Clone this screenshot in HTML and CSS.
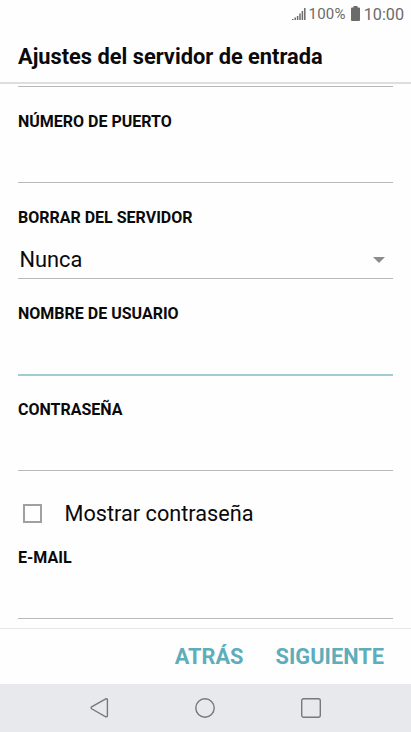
FILE: index.html
```html
<!DOCTYPE html>
<html lang="es">
<head>
    <meta charset="UTF-8">
    <meta name="viewport" content="width=device-width, initial-scale=1.0">
    <title>Ajustes del servidor de entrada</title>
    <link rel="stylesheet" href="styles.css">
</head>
<body>
    <div class="status-bar">
        <svg class="signal" width="14" height="14" viewBox="0 0 14 14">
            <path d="M.8 13v-1M3.200 13v-2.500M5.600 13V9M8 13V6.500M10.400 13V4M12.800 13V1" />
        </svg>
        <span class="battery-level">100%</span>
        <svg class="battery" width="9" height="15" viewBox="0 0 9 15">
            <path d="M2.500 0h4v1.500H8q1 0 1 1V14q0 1-1 1H1q-1 0-1-1V2.500q0-1 1-1h1.500z" />
        </svg>
        <span class="clock">10:00</span>
    </div>

    <header class="header">
        <h1>Ajustes del servidor de entrada</h1>
    </header>

    <form class="settings">
        <div class="field">
            <label class="field-label" for="port">NÚMERO DE PUERTO</label>
            <input type="text" class="field-input" id="port">
        </div>
        <div class="field">
            <span class="field-label">BORRAR DEL SERVIDOR</span>
            <div class="select">
                <span>Nunca</span>
                <svg class="arrow" width="12" height="6" viewBox="0 0 12 6">
                    <path d="M0 0h12L6 6z" />
                </svg>
            </div>
        </div>
        <div class="field active">
            <label class="field-label" for="user">NOMBRE DE USUARIO</label>
            <input type="text" class="field-input" id="user">
        </div>
        <div class="field">
            <label class="field-label" for="password">CONTRASEÑA</label>
            <input type="password" class="field-input" id="password">
        </div>
        <label class="show-password">
            <input type="checkbox" class="checkbox">
            <span>Mostrar contraseña</span>
        </label>
        <div class="field">
            <label class="field-label" for="email">E-MAIL</label>
            <input type="email" class="field-input" id="email">
        </div>
    </form>

    <footer class="actions">
        <button class="action-button">ATRÁS</button>
        <button class="action-button">SIGUIENTE</button>
    </footer>

    <nav class="nav-bar">
        <svg class="nav-icon" width="22" height="22" viewBox="0 0 22 22">
            <path d="M16.800 1.800 3 9.600q-1.800 1.200 0 2.400l13.800 7.800q1.600.5 1.600-1.300V3.100q0-1.800-1.600-1.300z" />
        </svg>
        <svg class="nav-icon" width="22" height="22" viewBox="0 0 22 22">
            <circle cx="11" cy="11" r="9.200" />
        </svg>
        <svg class="nav-icon" width="22" height="22" viewBox="0 0 22 22">
            <rect x="1.700" y="1.700" width="18.600" height="18.600" rx="2" />
        </svg>
    </nav>
</body>
</html>
```

FILE: styles.css
```css
* {
    margin: 0;
    padding: 0;
    box-sizing: border-box;
    font-family: Roboto, sans-serif;
}

:root {
    --accent: #5eadba;
    --line: #b9b9b9;
    --gray: #6b6b6b;
}

body {
    display: flex;
    flex-direction: column;
    height: 732px;
    background: #fefefe;
    color: #0a0a0a;
    overflow: hidden;
}

.status-bar {
    display: flex;
    justify-content: flex-end;
    align-items: center;
    height: 28px;
    padding-right: 7px;
    color: var(--gray);
}

.signal {
    margin-right: 3px;
    fill: none;
    stroke: var(--gray);
    stroke-width: 1.5;
}

.battery-level {
    font-size: 15px;
    letter-spacing: 0.2px;
}

.battery {
    margin: 0 4px 2px 5px;
    fill: var(--gray);
}

.clock {
    font-size: 16.2px;
}

.header {
    display: flex;
    align-items: center;
    height: 56px;
    padding: 3px 18px 0;
    border-bottom: 2px solid #dedede;
}

.header h1 {
    font-size: 21.8px;
    font-weight: 700;
    line-height: 28px;
}

.settings {
    flex: 1;
    margin: 0 18px;
    padding-top: 2px;
}

.settings::before {
    content: "";
    display: block;
    height: 1px;
    background: var(--line);
}

.field {
    display: flex;
    flex-direction: column;
    height: 96px;
    padding-top: 25px;
    border-bottom: 1px solid var(--line);
}

.field.active {
    border-bottom: 2px solid #9fcbd2;
    height: 97px;
    margin-bottom: -1px;
}

.field-label {
    font-size: 16px;
    font-weight: 700;
    line-height: 20px;
}

.field-input {
    flex: 1;
    border: none;
    outline: none;
    background: none;
    font-size: 22px;
}

.select {
    display: flex;
    flex: 1;
    justify-content: space-between;
    align-items: center;
    padding: 13px 8px 0 1.5px;
    font-size: 21.8px;
}

.arrow {
    fill: #8c8c8c;
}

.show-password {
    display: flex;
    align-items: center;
    gap: 22.5px;
    height: 52px;
    padding: 33px 0 0 5px;
    font-size: 21.7px;
}

.checkbox {
    appearance: none;
    width: 19px;
    height: 19px;
    border: 2px solid #a0a0a0;
}

.actions {
    display: flex;
    justify-content: flex-end;
    align-items: center;
    gap: 32px;
    height: 56px;
    padding-right: 27px;
    border-top: 1px solid #e6e6e6;
}

.action-button {
    border: none;
    background: none;
    color: var(--accent);
    font-size: 21.8px;
    font-weight: 700;
}

.nav-bar {
    display: flex;
    justify-content: center;
    align-items: center;
    gap: 83.5px;
    height: 48px;
    padding-right: 1px;
    background: #e8e9ed;
}

.nav-icon {
    fill: none;
    stroke: #77787b;
    stroke-width: 1.4;
}
```
